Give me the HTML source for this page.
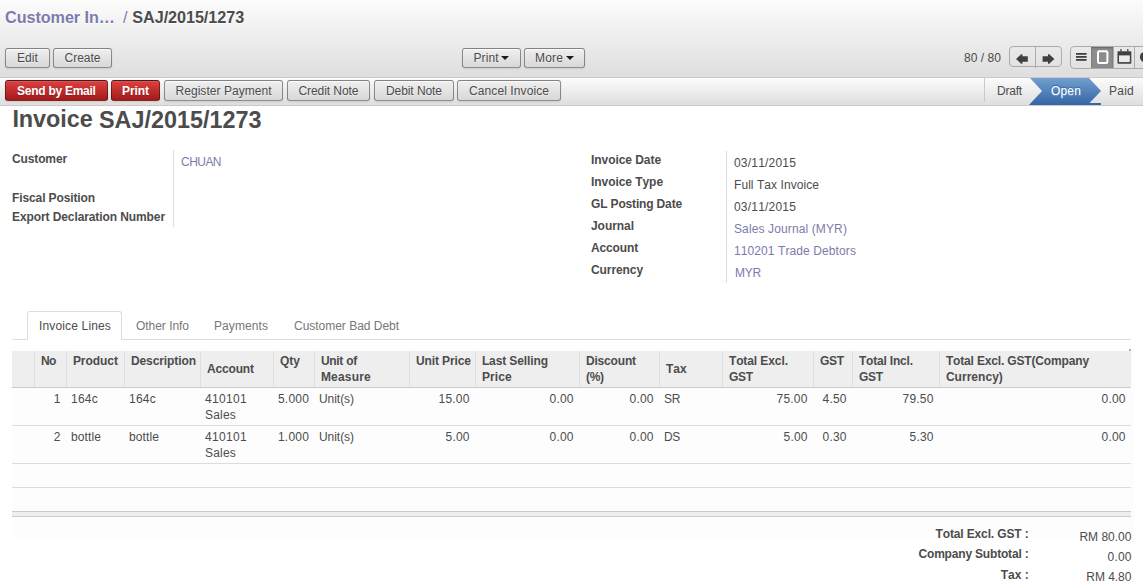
<!DOCTYPE html>
<html>
<head>
<meta charset="utf-8">
<title>SAJ/2015/1273 - Customer Invoices</title>
<style>
*{box-sizing:border-box;}
html,body{margin:0;padding:0;}
body{width:1143px;height:582px;overflow:hidden;background:#fff;font-family:"Liberation Sans",Arial,sans-serif;font-size:12px;color:#4c4c4c;position:relative;line-height:16px;font-kerning:none;font-variant-ligatures:none;}
.t{position:absolute;white-space:nowrap;line-height:16px;}
.lnk{color:#7c7bad;}
.vmh{position:absolute;left:0;top:0;width:1143px;height:78px;background:linear-gradient(to bottom,#fcfcfc,#dedede);border-bottom:1px solid #cacaca;}
.crumb{position:absolute;left:5px;top:6px;font-size:16.2px;font-weight:bold;letter-spacing:-0.06px;line-height:22px;white-space:nowrap;color:#4c4c4c;text-shadow:0 1px 1px #fff;}
.crumb .lnk{color:#7c7bad;}
.crumb .sep{font-weight:normal;color:#7c7bad;margin:0 5px 0 8px;}
.btn{position:absolute;height:20px;border:1px solid rgba(0,0,0,0.4);border-radius:3px;background:linear-gradient(to bottom,#efefef,#d8d8d8);box-shadow:0 1px 2px rgba(0,0,0,0.1),0 1px 1px rgba(255,255,255,0.8) inset;color:#4c4c4c;line-height:18px;text-align:center;text-shadow:0 1px 1px rgba(255,255,255,0.5);white-space:nowrap;}
.btn.red{background:linear-gradient(to bottom,#df3f3f,#a21a1a);color:#fff;font-weight:bold;text-shadow:0 1px 1px rgba(0,0,0,0.2);box-shadow:0 1px 2px rgba(0,0,0,0.1),0 1px 1px rgba(155,155,155,0.4) inset;}
.fh .btn{height:21px;line-height:20px;}
.caret{display:inline-block;width:0;height:0;border-left:4px solid transparent;border-right:4px solid transparent;border-top:4px solid #1c1c1c;vertical-align:middle;margin-left:3px;margin-top:-1px;}
.fh{position:absolute;left:0;top:78px;width:1143px;height:28px;background:linear-gradient(to bottom,#fcfcfc,#dedede);border-bottom:1px solid #cacaca;}
.pgrp{position:absolute;left:1009px;top:46px;width:53px;height:21px;border:1px solid #ababab;border-radius:4px;}
.pgrp i{position:absolute;left:25px;top:0;width:1px;height:21px;background:#ababab;}
.vsw{position:absolute;left:1070px;top:46px;width:90px;height:23px;border:1px solid #ababab;border-radius:4px;overflow:hidden;}
.vsw i{position:absolute;top:0;width:1px;height:23px;background:#ababab;}
.vsw .on{position:absolute;left:20px;top:0;width:22px;height:21px;background:#8c8c8c;box-shadow:0 1px 2px rgba(0,0,0,0.3) inset;}
svg{position:absolute;overflow:visible;}
.h1{position:absolute;margin:0;font-size:23.4px;line-height:30px;font-weight:bold;color:#4c4c4c;white-space:nowrap;}
.vsep{position:absolute;width:1px;background:#ddd;}
.tabs{position:absolute;left:12px;top:311px;width:1119px;height:29px;border-bottom:1px solid #ddd;}
.tabact{position:absolute;left:15px;top:0;width:95px;height:29px;border:1px solid #ddd;border-bottom:none;border-radius:3px 3px 0 0;background:#fff;}
table.list{position:absolute;left:12px;top:351px;width:1119px;border-collapse:collapse;table-layout:fixed;}
table.list th{background:#eee;text-align:left;font-weight:bold;vertical-align:top;padding:2px 0 2px 6.4px;border-left:1px solid #dfdfdf;border-bottom:1px solid #cacaca;height:36px;line-height:16px;white-space:nowrap;}
table.list th:first-child{border-left:none;}
table.list th.mid{vertical-align:middle;}
table.list td{vertical-align:top;padding:3px 5.6px 0 5px;border-bottom:1px solid #ddd;height:38px;line-height:16px;white-space:nowrap;}
table.list td.r{text-align:right;}
table.list tr.e td{height:24px;}
.foot{position:absolute;left:12px;top:511px;width:1119px;height:6px;background:#eee;border-top:1px solid #cacaca;border-bottom:1px solid #cacaca;}
</style>
</head>
<body>
<div class="vmh">
<div class="crumb"><span class="lnk">Customer In…</span><span class="sep">/</span><span>SAJ/2015/1273</span></div>
<div class="btn" style="left:5px;top:48px;width:45px;"><span style="letter-spacing:0.081px;margin-right:-0.081px">Edit</span></div>
<div class="btn" style="left:53px;top:48px;width:59px;"><span style="letter-spacing:-0.003px;margin-right:0.003px">Create</span></div>
<div class="btn" style="left:462px;top:48px;width:59px;"><span style="letter-spacing:0.065px;margin-right:-0.065px">Print</span><span class="caret"></span></div>
<div class="btn" style="left:524px;top:48px;width:61px;"><span style="letter-spacing:0.165px;margin-right:-0.165px">More</span><span class="caret"></span></div>
<div class="t " style="top:50px;letter-spacing:0.043px;left:964px;">80 / 80</div>
<div class="pgrp"><i></i></div>
<svg style="left:1016px;top:53.5px;" width="40" height="11" viewBox="0 0 40 11"><path d="M0 5 L5.2 0.2 L6.4 0.2 L6.4 2.2 L11.8 2.2 L11.8 7.8 L6.4 7.8 L6.4 9.8 L5.2 9.8 Z" fill="#404040"/><path d="M38.4 5 L33.2 0.2 L32 0.2 L32 2.2 L26.6 2.2 L26.6 7.8 L32 7.8 L32 9.8 L33.2 9.8 Z" fill="#404040"/></svg>
<div class="vsw"><div class="on"></div><i style="left:42px"></i><i style="left:63px"></i></div>
<svg style="left:1070px;top:46px;" width="73" height="23" viewBox="0 0 73 23">
<g fill="#404040"><rect x="6" y="7" width="10.6" height="1.8"/><rect x="6" y="10" width="10.6" height="1.8"/><rect x="6" y="13" width="10.6" height="1.8"/></g>
<rect x="28" y="5.2" width="9.4" height="11.8" rx="1.2" fill="none" stroke="#fff" stroke-width="2"/>
<rect x="47.5" y="5.2" width="13.8" height="12.6" rx="0.8" fill="#404040"/><rect x="49" y="9.4" width="10.8" height="6.7" fill="#ebebeb"/>
<g fill="#6a5a4a"><rect x="50.2" y="3" width="1.5" height="3"/><rect x="57" y="3" width="1.5" height="3"/></g>
<circle cx="75.2" cy="11" r="5.3" fill="#404040"/>
</svg>
</div>
<div class="fh">
<div class="btn red" style="left:5px;top:2px;width:103px;"><span style="letter-spacing:-0.271px;margin-right:0.271px">Send by Email</span></div>
<div class="btn red" style="left:111px;top:2px;width:49px;"><span style="letter-spacing:-0.067px;margin-right:0.067px">Print</span></div>
<div class="btn" style="left:164px;top:2px;width:119px;"><span style="letter-spacing:0.039px;margin-right:-0.039px">Register Payment</span></div>
<div class="btn" style="left:287px;top:2px;width:83px;"><span style="letter-spacing:-0.063px;margin-right:0.063px">Credit Note</span></div>
<div class="btn" style="left:374px;top:2px;width:80px;"><span style="letter-spacing:-0.070px;margin-right:0.070px">Debit Note</span></div>
<div class="btn" style="left:457px;top:2px;width:104px;"><span style="letter-spacing:0.092px;margin-right:-0.092px">Cancel Invoice</span></div>
<svg style="left:984px;top:0;" width="159" height="27" viewBox="0 0 159 27">
<defs>
<linearGradient id="gg" x1="0" y1="0" x2="0" y2="1"><stop offset="0" stop-color="#fcfcfc"/><stop offset="1" stop-color="#dedede"/></linearGradient>
<linearGradient id="gb" x1="0" y1="0" x2="0" y2="1"><stop offset="0" stop-color="#729fcf"/><stop offset="1" stop-color="#3465a4"/></linearGradient>
</defs>
<rect x="0" y="0" width="159" height="27" fill="url(#gg)"/>
<rect x="0" y="0" width="1" height="24" fill="#cacaca"/>
<path d="M46 0 L105 0 L117 13 L105.5 25 L117 25 L117 27 L45 27 L58 13 Z" fill="url(#gb)"/>
</svg>
<div class="t " style="top:5px;letter-spacing:-0.201px;left:997px;">Draft</div>
<div class="t " style="top:5px;letter-spacing:0.161px;left:1051px;color:#fff;text-shadow:0 1px 1px #729fcf,0 -1px 1px #3465a4;">Open</div>
<div class="t " style="top:5px;letter-spacing:0.246px;left:1109px;">Paid</div>
</div>
<div class="h1" style="left:12.4px;top:103.5px;letter-spacing:-0.05px">Invoice</div>
<div class="h1" style="left:99px;top:105px;">SAJ/2015/1273</div>
<div class="t " style="top:151px;letter-spacing:-0.126px;left:12px;font-weight:bold;">Customer</div>
<div class="t " style="top:190px;letter-spacing:-0.112px;left:12px;font-weight:bold;">Fiscal Position</div>
<div class="t " style="top:209px;letter-spacing:-0.095px;left:12px;font-weight:bold;">Export Declaration Number</div>
<div class="vsep" style="left:173px;top:150px;height:77px;"></div>
<div class="t lnk" style="top:154px;letter-spacing:-0.534px;left:181px;">CHUAN</div>
<div class="t " style="top:152px;letter-spacing:-0.058px;left:591px;font-weight:bold;">Invoice Date</div>
<div class="t " style="top:174px;letter-spacing:-0.058px;left:591px;font-weight:bold;">Invoice Type</div>
<div class="t " style="top:196px;letter-spacing:-0.156px;left:591px;font-weight:bold;">GL Posting Date</div>
<div class="t " style="top:218px;letter-spacing:-0.049px;left:591px;font-weight:bold;">Journal</div>
<div class="t " style="top:240px;letter-spacing:-0.143px;left:591px;font-weight:bold;">Account</div>
<div class="t " style="top:262px;letter-spacing:-0.086px;left:591px;font-weight:bold;">Currency</div>
<div class="vsep" style="left:726px;top:151px;height:132px;"></div>
<div class="t " style="top:155px;letter-spacing:0.194px;left:734px;">03/11/2015</div>
<div class="t " style="top:177px;letter-spacing:0.061px;left:734px;">Full Tax Invoice</div>
<div class="t " style="top:199px;letter-spacing:0.194px;left:734px;">03/11/2015</div>
<div class="t lnk" style="top:221px;letter-spacing:0.121px;left:734px;">Sales Journal (MYR)</div>
<div class="t lnk" style="top:243px;letter-spacing:0.096px;left:734px;">110201 Trade Debtors</div>
<div class="t lnk" style="top:265px;letter-spacing:-0.222px;left:735px;">MYR</div>
<div style="position:absolute;left:12px;top:346px;width:1122px;height:192px;background:#fdfdfd"></div>
<div class="tabs"><div class="tabact"></div></div>
<div class="t " style="top:318px;letter-spacing:0.151px;left:39px;">Invoice Lines</div>
<div class="t " style="top:318px;letter-spacing:-0.036px;left:136px;color:#777;">Other Info</div>
<div class="t " style="top:318px;letter-spacing:0.081px;left:214px;color:#777;">Payments</div>
<div class="t " style="top:318px;letter-spacing:-0.022px;left:294px;color:#777;">Customer Bad Debt</div>
<table class="list"><colgroup><col style="width:22px"><col style="width:32px"><col style="width:58px"><col style="width:76px"><col style="width:73px"><col style="width:41px"><col style="width:95px"><col style="width:66px"><col style="width:104px"><col style="width:80px"><col style="width:63px"><col style="width:91px"><col style="width:39px"><col style="width:87px"><col style="width:192px"></colgroup>
<thead><tr><th><span style="letter-spacing:0.000px;margin-right:0.000px"></span></th><th><span style="letter-spacing:-0.498px;margin-right:0.498px">No</span></th><th><span style="letter-spacing:-0.048px;margin-right:0.048px">Product</span></th><th><span style="letter-spacing:-0.092px;margin-right:0.092px">Description</span></th><th class=mid><span style="letter-spacing:-0.143px;margin-right:0.143px">Account</span></th><th><span style="letter-spacing:-0.001px;margin-right:0.001px">Qty</span></th><th><span style="letter-spacing:-0.284px;margin-right:0.284px">Unit of</span><br><span style="letter-spacing:0.187px;margin-right:-0.187px">Measure</span></th><th><span style="letter-spacing:-0.102px;margin-right:0.102px">Unit Price</span></th><th><span style="letter-spacing:-0.112px;margin-right:0.112px">Last Selling</span><br><span style="letter-spacing:0.129px;margin-right:-0.129px">Price</span></th><th><span style="letter-spacing:-0.167px;margin-right:0.167px">Discount</span><br><span style="letter-spacing:-0.221px;margin-right:0.221px">(%)</span></th><th class=mid><span style="letter-spacing:0.107px;margin-right:-0.107px">Tax</span></th><th><span style="letter-spacing:-0.093px;margin-right:0.093px">Total Excl.</span><br><span style="letter-spacing:-0.223px;margin-right:0.223px">GST</span></th><th><span style="letter-spacing:-0.223px;margin-right:0.223px">GST</span></th><th><span style="letter-spacing:-0.182px;margin-right:0.182px">Total Incl.</span><br><span style="letter-spacing:-0.223px;margin-right:0.223px">GST</span></th><th><span style="letter-spacing:-0.160px;margin-right:0.160px">Total Excl. GST(Company</span><br><span style="letter-spacing:0.035px;margin-right:-0.035px">Currency)</span></th></tr></thead><tbody>
<tr><td><span style="letter-spacing:0.000px;margin-right:0.000px"></span></td><td class=r><span style="letter-spacing:0.326px;margin-right:-0.326px">1</span></td><td><span style="letter-spacing:0.245px;margin-right:-0.245px">164c</span></td><td><span style="letter-spacing:0.245px;margin-right:-0.245px">164c</span></td><td><span style="letter-spacing:0.326px;margin-right:-0.326px">410101</span><br><span style="letter-spacing:0.196px;margin-right:-0.196px">Sales</span></td><td class=r><span style="letter-spacing:0.194px;margin-right:-0.194px">5.000</span></td><td><span style="letter-spacing:-0.047px;margin-right:0.047px">Unit(s)</span></td><td class=r><span style="letter-spacing:0.194px;margin-right:-0.194px">15.00</span></td><td class=r><span style="letter-spacing:0.161px;margin-right:-0.161px">0.00</span></td><td class=r><span style="letter-spacing:0.161px;margin-right:-0.161px">0.00</span></td><td><span style="letter-spacing:-0.335px;margin-right:0.335px">SR</span></td><td class=r><span style="letter-spacing:0.194px;margin-right:-0.194px">75.00</span></td><td class=r><span style="letter-spacing:0.161px;margin-right:-0.161px">4.50</span></td><td class=r><span style="letter-spacing:0.194px;margin-right:-0.194px">79.50</span></td><td class=r><span style="letter-spacing:0.161px;margin-right:-0.161px">0.00</span></td></tr>
<tr><td><span style="letter-spacing:0.000px;margin-right:0.000px"></span></td><td class=r><span style="letter-spacing:0.326px;margin-right:-0.326px">2</span></td><td><span style="letter-spacing:0.107px;margin-right:-0.107px">bottle</span></td><td><span style="letter-spacing:0.107px;margin-right:-0.107px">bottle</span></td><td><span style="letter-spacing:0.326px;margin-right:-0.326px">410101</span><br><span style="letter-spacing:0.196px;margin-right:-0.196px">Sales</span></td><td class=r><span style="letter-spacing:0.194px;margin-right:-0.194px">1.000</span></td><td><span style="letter-spacing:-0.047px;margin-right:0.047px">Unit(s)</span></td><td class=r><span style="letter-spacing:0.161px;margin-right:-0.161px">5.00</span></td><td class=r><span style="letter-spacing:0.161px;margin-right:-0.161px">0.00</span></td><td class=r><span style="letter-spacing:0.161px;margin-right:-0.161px">0.00</span></td><td><span style="letter-spacing:-0.335px;margin-right:0.335px">DS</span></td><td class=r><span style="letter-spacing:0.161px;margin-right:-0.161px">5.00</span></td><td class=r><span style="letter-spacing:0.161px;margin-right:-0.161px">0.30</span></td><td class=r><span style="letter-spacing:0.161px;margin-right:-0.161px">5.30</span></td><td class=r><span style="letter-spacing:0.161px;margin-right:-0.161px">0.00</span></td></tr>
<tr class="e"><td colspan="15"></td></tr></tbody></table>
<div class="foot"></div>
<div style="position:absolute;left:1129px;top:349px;width:2px;height:2px;background:#b0b0b0"></div>
<div class="t " style="top:526px;letter-spacing:-0.138px;right:114.438px;font-weight:bold;">Total Excl. GST :</div>
<div class="t " style="top:546px;letter-spacing:-0.185px;right:114.485px;font-weight:bold;">Company Subtotal :</div>
<div class="t " style="top:567px;letter-spacing:-0.002px;right:114.302px;font-weight:bold;">Tax :</div>
<div class="t " style="top:529px;letter-spacing:-0.003px;right:11.603px;">RM 80.00</div>
<div class="t " style="top:549px;letter-spacing:0.161px;right:11.439px;">0.00</div>
<div class="t " style="top:569px;letter-spacing:-0.050px;right:11.650px;">RM 4.80</div>
</body>
</html>
